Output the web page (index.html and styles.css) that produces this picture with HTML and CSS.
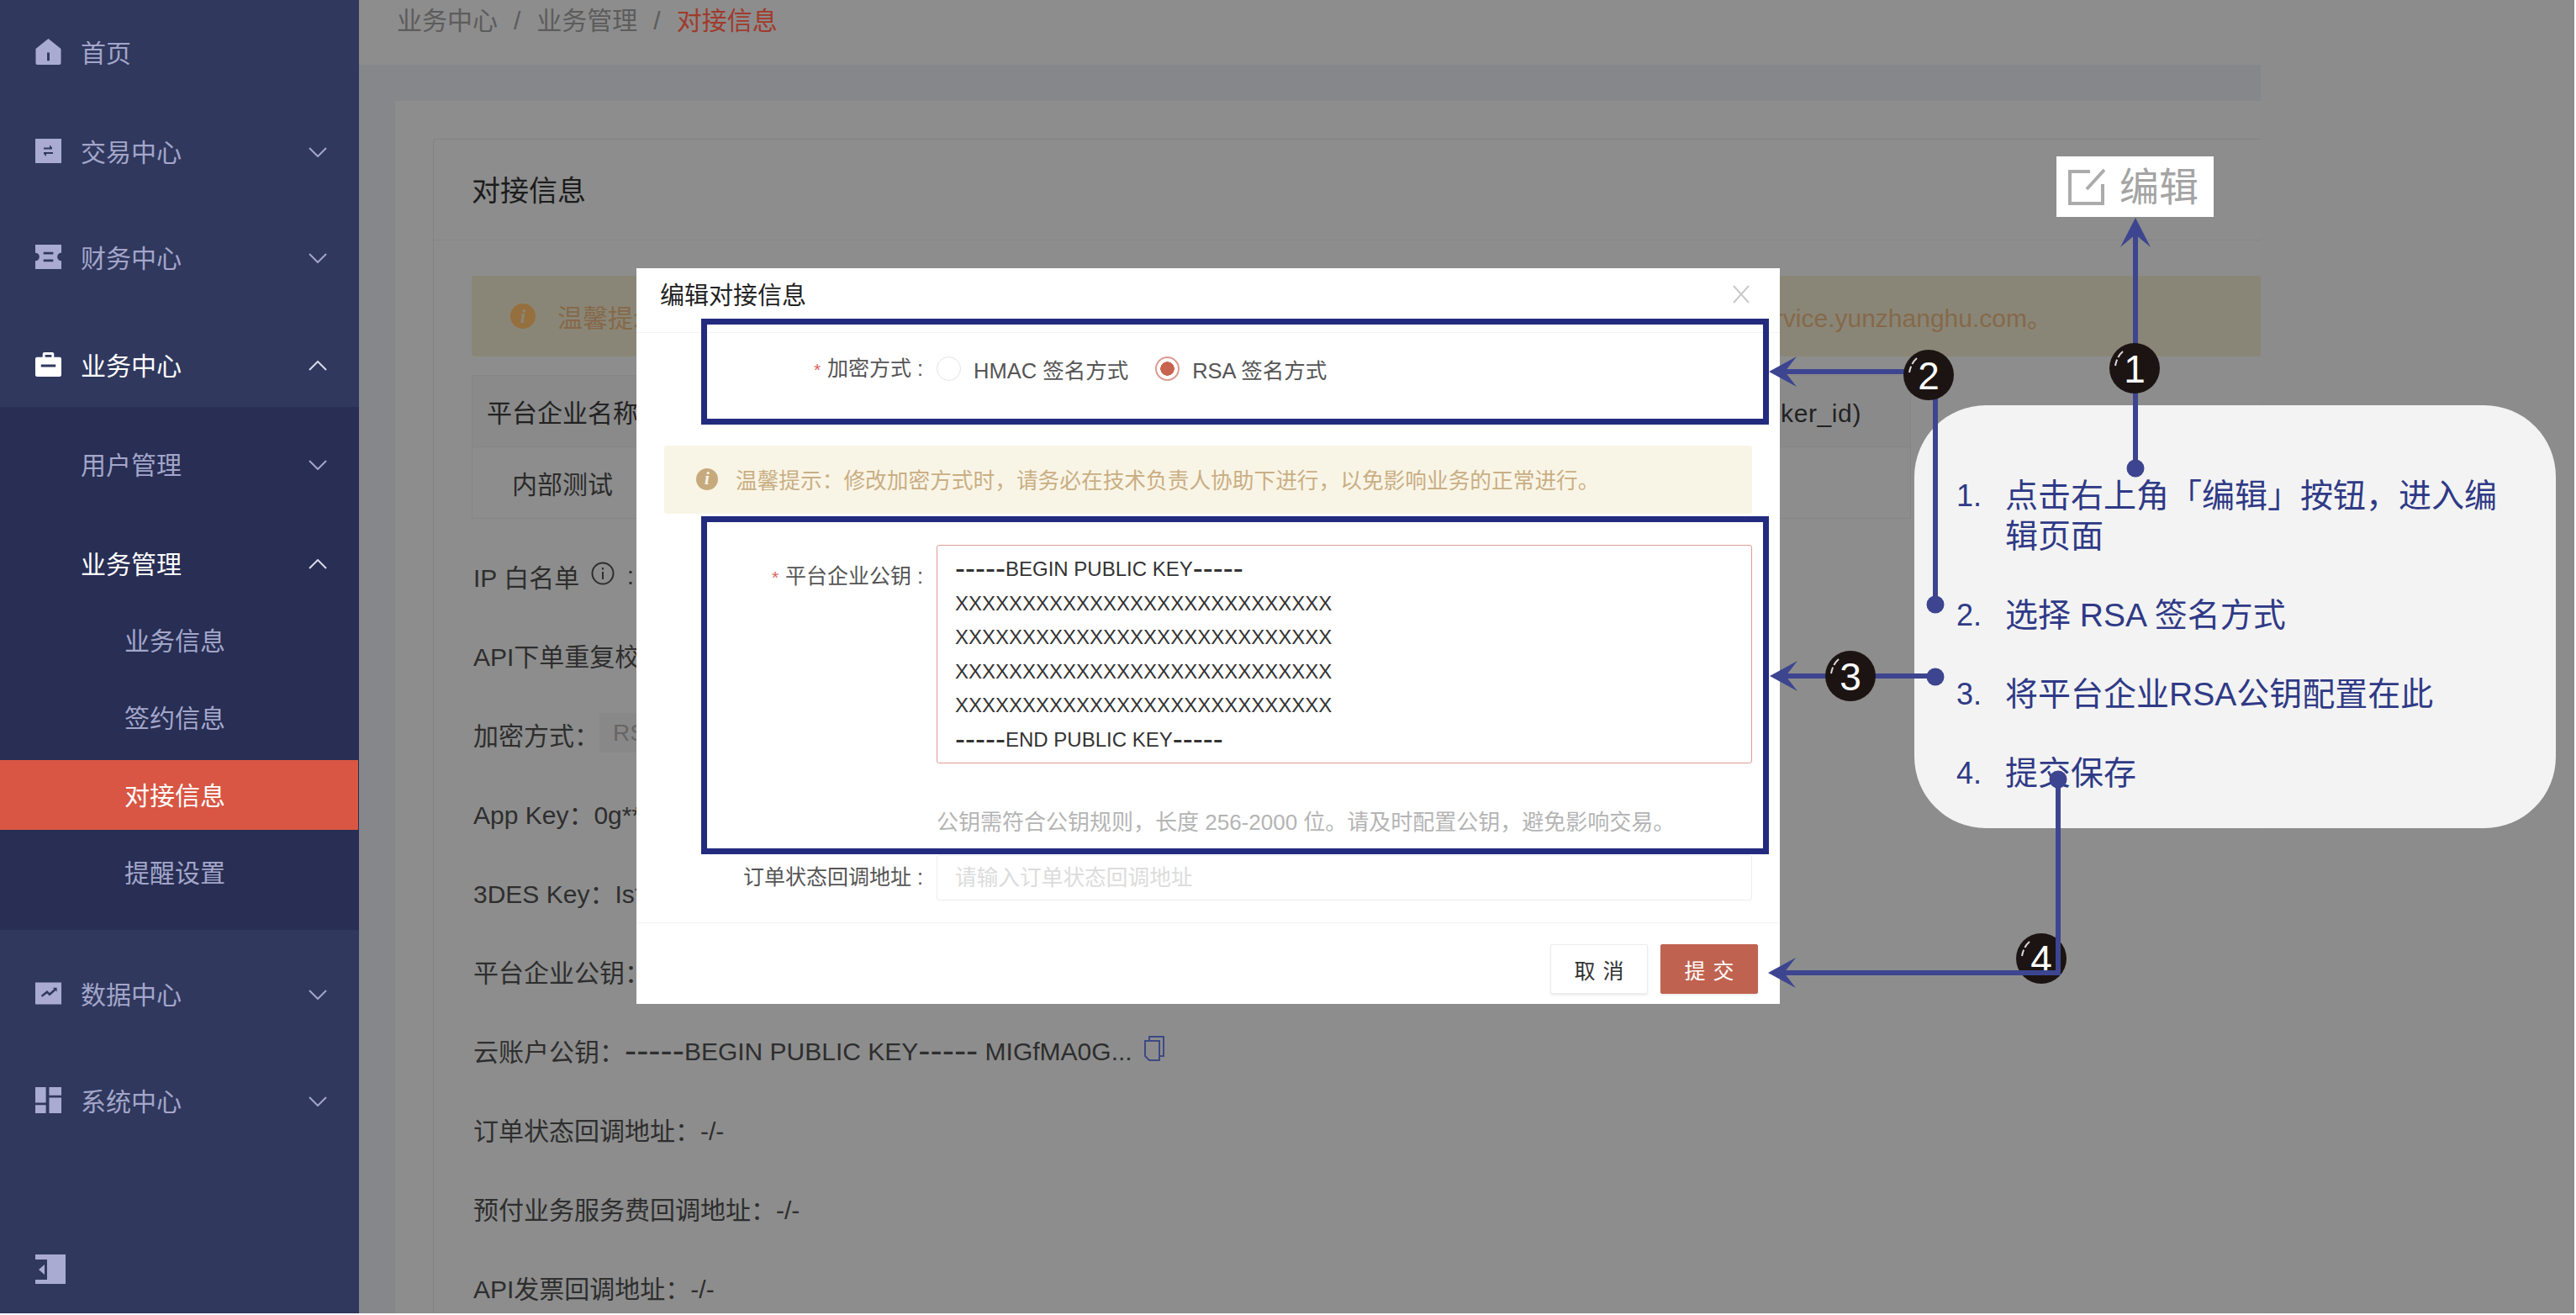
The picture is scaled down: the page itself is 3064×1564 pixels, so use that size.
FILE: index.html
```html
<!DOCTYPE html>
<html lang="zh-CN">
<head>
<meta charset="utf-8">
<title>编辑对接信息</title>
<link rel="stylesheet" href="styles.css">
</head>
<body>
<div class="frame">
  <aside class="side">
    <div class="nav">
      <div class="nav-item g-first">
        <svg class="ico" viewBox="0 0 31 32"><path class="ico-fill" fill-rule="evenodd" d="M15.5 0 30 11.5c.7.5 1 1 1 2V30c0 1.2-.8 2-2 2H2c-1.200 0-2-.8-2-2V13.500c0-1 .3-1.500 1-2zM14 17v10h3V17z"/></svg>
        <span class="nav-text">首页</span>
      </div>
      <div class="nav-item g-22">
        <svg class="ico" viewBox="0 0 31 29"><path class="ico-fill" fill-rule="evenodd" d="M0 0h31v29H0zM10 10.500v2h10v-2l-3-3v3zM10 16v2l3 3v-3h8v-2z"/></svg>
        <span class="nav-text">交易中心</span>
        <svg class="chev" viewBox="0 0 22 12"><path d="M1 1l10 10L21 1"/></svg>
      </div>
      <div class="nav-item g-30">
        <svg class="ico" viewBox="0 0 32 30"><path class="ico-fill" fill-rule="evenodd" d="M0 0h32v10a5 5 0 0 0 0 10v10H0V20a5 5 0 0 0 0-10zM10 9v3h12V9zM10 18v3h12v-3z"/></svg>
        <span class="nav-text">财务中心</span>
        <svg class="chev" viewBox="0 0 22 12"><path d="M1 1l10 10L21 1"/></svg>
      </div>
      <div class="nav-item g-32 is-open">
        <svg class="ico" viewBox="0 0 32 30"><path class="ico-white" fill-rule="evenodd" d="M9 6V2c0-1 1-2 2-2h10c1 0 2 1 2 2v4h7c1 0 2 1 2 2v20c0 1-1 2-2 2H2c-1 0-2-1-2-2V8c0-1 1-2 2-2zM12 3v3h8V3zM7 15v3h18v-3z"/></svg>
        <span class="nav-text">业务中心</span>
        <svg class="chev" viewBox="0 0 22 12"><path d="M1 11L11 1l10 10"/></svg>
      </div>
      <div class="sub">
        <div class="sub-item">
          <span class="nav-text">用户管理</span>
          <svg class="chev" viewBox="0 0 22 12"><path d="M1 1l10 10L21 1"/></svg>
        </div>
        <div class="sub-item is-open">
          <span class="nav-text">业务管理</span>
          <svg class="chev" viewBox="0 0 22 12"><path d="M1 11L11 1l10 10"/></svg>
        </div>
        <div class="leafs">
          <div class="leaf">业务信息</div>
          <div class="leaf">签约信息</div>
          <div class="leaf is-active">对接信息</div>
          <div class="leaf">提醒设置</div>
        </div>
      </div>
      <div class="nav-item g-30">
        <svg class="ico" viewBox="0 0 32 27"><path class="ico-fill" fill-rule="evenodd" d="M0 0h32v27H0zM7 16l1.500 2 6-4.500 3 3 7.500-6.500 1.500 1.500V6.500h-5l1.500 1.500-5.500 5-3-3z"/></svg>
        <span class="nav-text">数据中心</span>
        <svg class="chev" viewBox="0 0 22 12"><path d="M1 1l10 10L21 1"/></svg>
      </div>
      <div class="nav-item g-31">
        <svg class="ico" viewBox="0 0 32 32"><path class="ico-fill" d="M0 0h13v19H0zM17 0h15v10H17zM0 22h13v10H0zM17 13h15v19H17z"/></svg>
        <span class="nav-text">系统中心</span>
        <svg class="chev" viewBox="0 0 22 12"><path d="M1 1l10 10L21 1"/></svg>
      </div>
    </div>
    <div class="side-foot">
      <svg class="collapse" viewBox="0 0 36 35"><path class="ico-fill" fill-rule="evenodd" d="M0 0h36v35H0v-5h14V6H0zM11 12l-7 6 7 6z"/></svg>
    </div>
  </aside>

  <main class="main">
    <div class="crumbs">
      <span>业务中心</span><span class="sep">/</span><span>业务管理</span><span class="sep">/</span><span class="crumb-now">对接信息</span>
    </div>
    <div class="band">
      <div class="panel">
        <section class="card">
          <h1 class="card-head">对接信息</h1>
          <div class="card-body">
            <div class="alert">
              <span class="alert-left"><span class="info info-dim">i</span>温馨提示：</span>
              <span>service.yunzhanghu.com。</span>
            </div>
            <div class="tbl">
              <div class="tbl-row tbl-head">
                <div class="cell">平台企业名称</div>
                <div class="cell"></div>
                <div class="cell cell-last"><span class="cell-id">综合服务主体 ID (broker_id)</span></div>
              </div>
              <div class="tbl-row">
                <div class="cell">内部测试</div>
                <div class="cell"></div>
                <div class="cell cell-last"></div>
              </div>
            </div>
            <div class="fields">
              <div class="field">IP 白名单 <svg class="tip" viewBox="0 0 28 28"><circle cx="14" cy="14" r="12.500"/><path d="M14 12v9M14 7v2.500"/></svg> :</div>
              <div class="field">API下单重复校验</div>
              <div class="field">加密方式：<span class="tag">RSA</span></div>
              <div class="field">App Key：0g******</div>
              <div class="field">3DES Key：Is******</div>
              <div class="field">平台企业公钥：</div>
              <div class="field">云账户公钥：<span class="key-text"><span class="dash">-----</span>BEGIN PUBLIC KEY<span class="dash">-----</span> MIGfMA0G...</span><svg class="copy" viewBox="0 0 24 30"><path d="M6 5V1h17v23h-5M1 6h17v23H6l-5-5z"/></svg></div>
              <div class="field">订单状态回调地址：-/-</div>
              <div class="field">预付业务服务费回调地址：-/-</div>
              <div class="field">API发票回调地址：-/-</div>
            </div>
          </div>
        </section>
      </div>
    </div>
  </main>

  <div class="modal">
    <div class="modal-head">
      <span class="modal-title">编辑对接信息</span>
      <svg class="modal-x" viewBox="0 0 20 22"><path d="M1 1l18 20M19 1L1 21"/></svg>
    </div>
    <div class="modal-body">
      <div class="row row-enc">
        <div class="label"><span class="star">*</span>加密方式 :</div>
        <div class="radios">
          <span class="radio"></span><span class="radio-text">HMAC 签名方式</span>
          <span class="radio radio-on"></span><span class="radio-text">RSA 签名方式</span>
        </div>
      </div>
      <div class="notice"><span class="info info-soft">i</span>温馨提示：修改加密方式时，请务必在技术负责人协助下进行，以免影响业务的正常进行。</div>
      <div class="row row-key">
        <div class="label label-key"><span class="star">*</span>平台企业公钥 :</div>
        <div class="keybox">
          <div><span class="dash">-----</span>BEGIN PUBLIC KEY<span class="dash">-----</span></div>
          <div>XXXXXXXXXXXXXXXXXXXXXXXXXXXX</div>
          <div>XXXXXXXXXXXXXXXXXXXXXXXXXXXX</div>
          <div>XXXXXXXXXXXXXXXXXXXXXXXXXXXX</div>
          <div>XXXXXXXXXXXXXXXXXXXXXXXXXXXX</div>
          <div><span class="dash">-----</span>END PUBLIC KEY<span class="dash">-----</span></div>
        </div>
      </div>
      <div class="hint">公钥需符合公钥规则，长度 256-2000 位。请及时配置公钥，避免影响交易。</div>
      <div class="row row-url">
        <div class="label">订单状态回调地址 :</div>
        <div class="input">请输入订单状态回调地址</div>
      </div>
    </div>
    <div class="modal-foot">
      <button class="btn">取 消</button>
      <button class="btn btn-primary">提 交</button>
    </div>
  </div>

  <div class="mark mark-enc"></div>
  <div class="mark mark-key"></div>

  <div class="edit-call">
    <svg class="edit-ico" viewBox="0 0 44 44"><path d="M26 4H2v38h39V19M43 2L22 25"/></svg>
    <span class="edit-text">编辑</span>
  </div>

  <div class="bubble">
    <ol class="steps">
      <li class="step"><span class="step-no">1.</span><span>点击右上角「编辑」按钮，进入编辑页面</span></li>
      <li class="step"><span class="step-no">2.</span><span>选择 RSA 签名方式</span></li>
      <li class="step"><span class="step-no">3.</span><span>将平台企业RSA公钥配置在此</span></li>
      <li class="step"><span class="step-no">4.</span><span>提交保存</span></li>
    </ol>
  </div>

  <svg class="anno" viewBox="0 0 3064 1564">
    <path class="ln" d="M2540 275V557"/>
    <path class="hd" d="M2540 259l18 35-18-15-18 15z"/>
    <circle class="hd" cx="2540" cy="557" r="10.500"/>

    <path class="ln" d="M2120 442H2280M2302 470V719"/>
    <path class="hd" d="M2104 442l33-18-14 18 14 18z"/>
    <circle class="hd" cx="2302" cy="719" r="10.500"/>

    <path class="ln" d="M2120 804H2302"/>
    <path class="hd" d="M2105 804l33-18-14 18 14 18z"/>
    <circle class="hd" cx="2302" cy="805" r="10.500"/>

    <g transform="translate(2539 438)"><circle class="bd" r="30"/><path class="gl" d="M-14-20q-7 6-9 17"/><text class="bn" y="17">1</text></g>
    <g transform="translate(2294 446)"><circle class="bd" r="30"/><path class="gl" d="M-14-20q-7 6-9 17"/><text class="bn" y="17">2</text></g>
    <g transform="translate(2201 804)"><circle class="bd" r="30"/><path class="gl" d="M-14-20q-7 6-9 17"/><text class="bn" y="17">3</text></g>
    <g transform="translate(2428 1140)"><circle class="bd" r="30"/><path class="gl" d="M-14-20q-7 6-9 17"/><text class="bn" y="17">4</text></g>

    <path class="ln" d="M2448 927V1157H2120"/>
    <path class="hd" d="M2103 1157l33-18-14 18 14 18z"/>
    <circle class="hd" cx="2448" cy="927" r="10.500"/>
  </svg>
</div>
</body>
</html>
```

FILE: styles.css
```css
* { box-sizing: border-box; }
html, body { margin: 0; padding: 0; background: #fff; }
body {
  width: 3064px;
  height: 1564px;
  overflow: hidden;
  font-family: "Liberation Sans", "Noto Sans CJK SC", sans-serif;
  color: #2b2b2b;
}
.frame {
  position: relative;
  display: flex;
  width: 3062px;
  height: 1562px;
  overflow: hidden;
  background: #8c8c8c;
}

/* sidebar */
.side {
  width: 427px;
  flex: none;
  display: flex;
  flex-direction: column;
  justify-content: space-between;
  background: #30385e;
  font-size: 30px;
  color: #a3a6c9;
}
.nav-item, .sub-item {
  display: flex;
  align-items: center;
  height: 96px;
  padding: 0 38px 6px 42px;
}
.g-first { margin-top: 16px; }
.g-22 { margin-top: 22px; }
.g-30 { margin-top: 30px; }
.g-31 { margin-top: 31px; }
.g-32 { margin-top: 32px; }
.ico { width: 31px; height: 31px; flex: none; margin-right: 23px; }
.ico-fill { fill: #a9abd2; }
.ico-white { fill: #fff; }
.nav-text { flex: 1; }
.chev { width: 22px; height: 12px; flex: none; margin-top: 4px; }
.chev path { fill: none; stroke: #a3a6c9; stroke-width: 2; }
.is-open { color: #fff; }
.is-open .chev path { stroke: #d9daea; }
.sub {
  background: #282e54;
  height: 622px;
  padding-top: 22px;
}
.sub-item { padding-left: 96px; margin-bottom: 22px; }
.leafs {
  display: flex;
  flex-direction: column;
  gap: 9px;
  width: 426px;
  margin-top: -22px;
}
.leaf {
  height: 83px;
  line-height: 86px;
  padding-left: 148px;
}
.is-active { background: #d85643; color: #fff; }
.side-foot { padding: 0 0 35px 42px; }
.collapse { display: block; width: 36px; height: 35px; }

/* page behind the modal */
.main {
  width: 2262px;
  flex: none;
  display: flex;
  flex-direction: column;
}
.crumbs {
  height: 77px;
  flex: none;
  padding-left: 45px;
  line-height: 50px;
  font-size: 30px;
  color: #5c5c5c;
  background: #8d8d8d;
}
.sep { margin: 0 19px; }
.crumb-now { color: #a03a2c; }
.band {
  flex: 1;
  min-height: 0;
  padding: 43px 0 0 43px;
  background: #85878a;
}
.panel {
  height: 100%;
  padding: 45px 0 0 45px;
  background: #8d8d8d;
}
.card {
  height: 100%;
  border: 1px solid #838383;
  border-right: 0;
  border-bottom: 0;
  border-radius: 4px 0 0 0;
}
.card-head {
  margin: 0;
  height: 120px;
  padding-left: 45px;
  line-height: 122px;
  font-size: 34px;
  font-weight: 400;
  color: #1c1c1c;
  border-bottom: 1px solid #858585;
}
.card-body { padding: 42px 0 0 45px; font-size: 30px; }
.alert {
  display: flex;
  justify-content: space-between;
  align-items: center;
  height: 96px;
  padding: 0 248px 0 46px;
  background: #8a8677;
  color: #85694a;
  border-radius: 4px 0 0 4px;
}
.alert-left { display: flex; align-items: center; gap: 26px; }
.info {
  display: inline-flex;
  align-items: center;
  justify-content: center;
  flex: none;
  border-radius: 50%;
  font-family: "Liberation Serif", serif;
  font-style: italic;
  font-weight: 700;
}
.info-dim { width: 30px; height: 30px; background: #966f3f; color: #8a8677; font-size: 24px; }
.info-soft { width: 26px; height: 26px; margin-right: 21px; background: #c6aa7d; color: #f9f5e6; font-size: 21px; }
.tbl { width: 1712px; margin-top: 22px; border: 1px solid #858585; border-top: 0; }
.tbl-row {
  display: grid;
  grid-template-columns: 214px 700px 1fr;
  height: 85px;
  border-top: 1px solid #858585;
}
.tbl-head { background: #8a8a8a; color: #222; }
.cell { display: flex; align-items: center; justify-content: center; white-space: nowrap; }
.cell-last { justify-content: flex-end; padding-right: 58px; }
.cell-id { letter-spacing: .6px; }
.fields { margin-top: 21px; padding-left: 2px; }
.field { display: flex; align-items: center; height: 94px; white-space: pre; color: #2e2e2e; }
.tip { width: 28px; height: 28px; margin: -6px 6px 0 6px; }
.tip circle, .tip path { fill: none; stroke: #2e2e2e; stroke-width: 2; }
.tag {
  height: 47px;
  line-height: 47px;
  margin-top: -4px;
  padding: 0 16px;
  background: #888;
  color: #666;
  font-size: 28px;
}
.dash { font-size: 1.42em; line-height: 1; vertical-align: -.07em; }
.keybox .dash { font-size: 1.5em; }
.copy { width: 24px; height: 30px; margin: -4px 0 0 14px; }
.copy path { fill: none; stroke: #3e4a84; stroke-width: 2; }

/* modal */
.modal {
  position: absolute;
  left: 757px;
  top: 319px;
  width: 1360px;
  height: 875px;
  display: flex;
  flex-direction: column;
  background: #fff;
  font-size: 25px;
  color: #555;
}
.modal-head {
  display: flex;
  justify-content: space-between;
  align-items: center;
  height: 77px;
  flex: none;
  padding: 0 36px 16px 28px;
  border-bottom: 1px solid #f3f3f3;
}
.modal-title { font-size: 29px; color: #222; }
.modal-x { width: 20px; height: 22px; margin-top: 2px; }
.modal-x path { fill: none; stroke: #c9c9c9; stroke-width: 2; }
.modal-body { flex: 1; padding: 24px 33px 0; }
.row {
  display: grid;
  grid-template-columns: 308px 1fr;
  column-gap: 16px;
}
.row-enc { height: 30px; align-items: center; }
.label { text-align: right; white-space: pre; line-height: 30px; }
.label-key { padding-top: 22px; }
.star { margin-right: 8px; color: #d9645a; font-size: 21px; }
.radios { display: flex; align-items: center; }
.radio {
  width: 29px;
  height: 29px;
  flex: none;
  margin-right: 15px;
  border: 1px solid #e3e3e3;
  border-radius: 50%;
  background: #fff;
}
.radio-text { margin-right: 32px; white-space: pre; font-size: 25.500px; }
.radio-on {
  border: 2px solid #dc9b90;
  background: radial-gradient(circle, #c8634f 0 8px, #fff 8.500px);
}
.notice {
  display: flex;
  align-items: center;
  height: 81px;
  margin-top: 80px;
  padding: 0 0 2px 38px;
  background: #f9f5e6;
  color: #c9ae84;
  font-size: 25.700px;
  border-radius: 3px;
}
.row-key { margin-top: 37px; }
.keybox {
  height: 260px;
  padding: 8px 21px 0;
  border: 1px solid #dd9d97;
  border-radius: 3px;
  font-size: 24px;
  line-height: 40.600px;
  color: #333;
}
.hint { margin: 54px 0 0 324px; height: 30px; line-height: 32px; color: #b4b4b4; font-size: 26px; white-space: nowrap; }
.row-url { margin-top: 25px; }
.row-url .label { padding-top: 11px; }
.input {
  height: 54px;
  padding-left: 21px;
  line-height: 53px;
  border: 1px solid #ededed;
  border-radius: 3px;
  color: #dcdcdc;
  font-size: 25.700px;
}
.modal-foot {
  display: flex;
  justify-content: flex-end;
  gap: 15px;
  height: 97px;
  flex: none;
  padding: 25px 26px 0 0;
  border-top: 1px solid #f3f3f3;
}
.btn {
  width: 116px;
  height: 59px;
  padding: 0;
  border: 1px solid #ececec;
  border-radius: 2px;
  background: #fff;
  color: #333;
  font: inherit;
  word-spacing: 2px;
  box-shadow: 0 2px 3px rgba(0, 0, 0, .08);
}
.btn-primary { background: #bf6350; border-color: #bf6350; color: #fff; }

/* annotations */
.mark {
  position: absolute;
  left: 834px;
  width: 1270px;
  border: 7px solid #232b7e;
  pointer-events: none;
}
.mark-enc { top: 379px; height: 126px; }
.mark-key { top: 614px; height: 402px; }
.edit-call {
  position: absolute;
  left: 2446px;
  top: 186px;
  width: 187px;
  height: 72px;
  display: flex;
  align-items: center;
  gap: 19px;
  padding-left: 14px;
  background: #fff;
  font-size: 47px;
  color: #a4a4a4;
}
.edit-ico { width: 44px; height: 44px; flex: none; }
.edit-ico path { fill: none; stroke: #ababab; stroke-width: 4; }
.edit-text { margin-top: -8px; margin-left: -2px; }
.bubble {
  position: absolute;
  left: 2277px;
  top: 482px;
  width: 763px;
  height: 503px;
  padding: 84px 60px 0 50px;
  background: #f3f3f3;
  border-radius: 85px;
  font-size: 39px;
  color: #2f3a86;
}
.steps { margin: 0; padding: 0; list-style: none; }
.step { display: flex; line-height: 48px; margin-bottom: 46px; }
.step-no { width: 58px; flex: none; font-size: 36px; }
.anno {
  position: absolute;
  left: 0;
  top: 0;
  width: 3064px;
  height: 1564px;
  pointer-events: none;
}
.ln { fill: none; stroke: #3d4590; stroke-width: 6; }
.hd { fill: #3d4590; }
.bd { fill: #1c1412; }
.gl { fill: none; stroke: #d8d8d8; stroke-width: 2; stroke-dasharray: 9 3; }
.bn {
  fill: #fff;
  font-family: "Liberation Sans", sans-serif;
  font-size: 46px;
  text-anchor: middle;
}
```
